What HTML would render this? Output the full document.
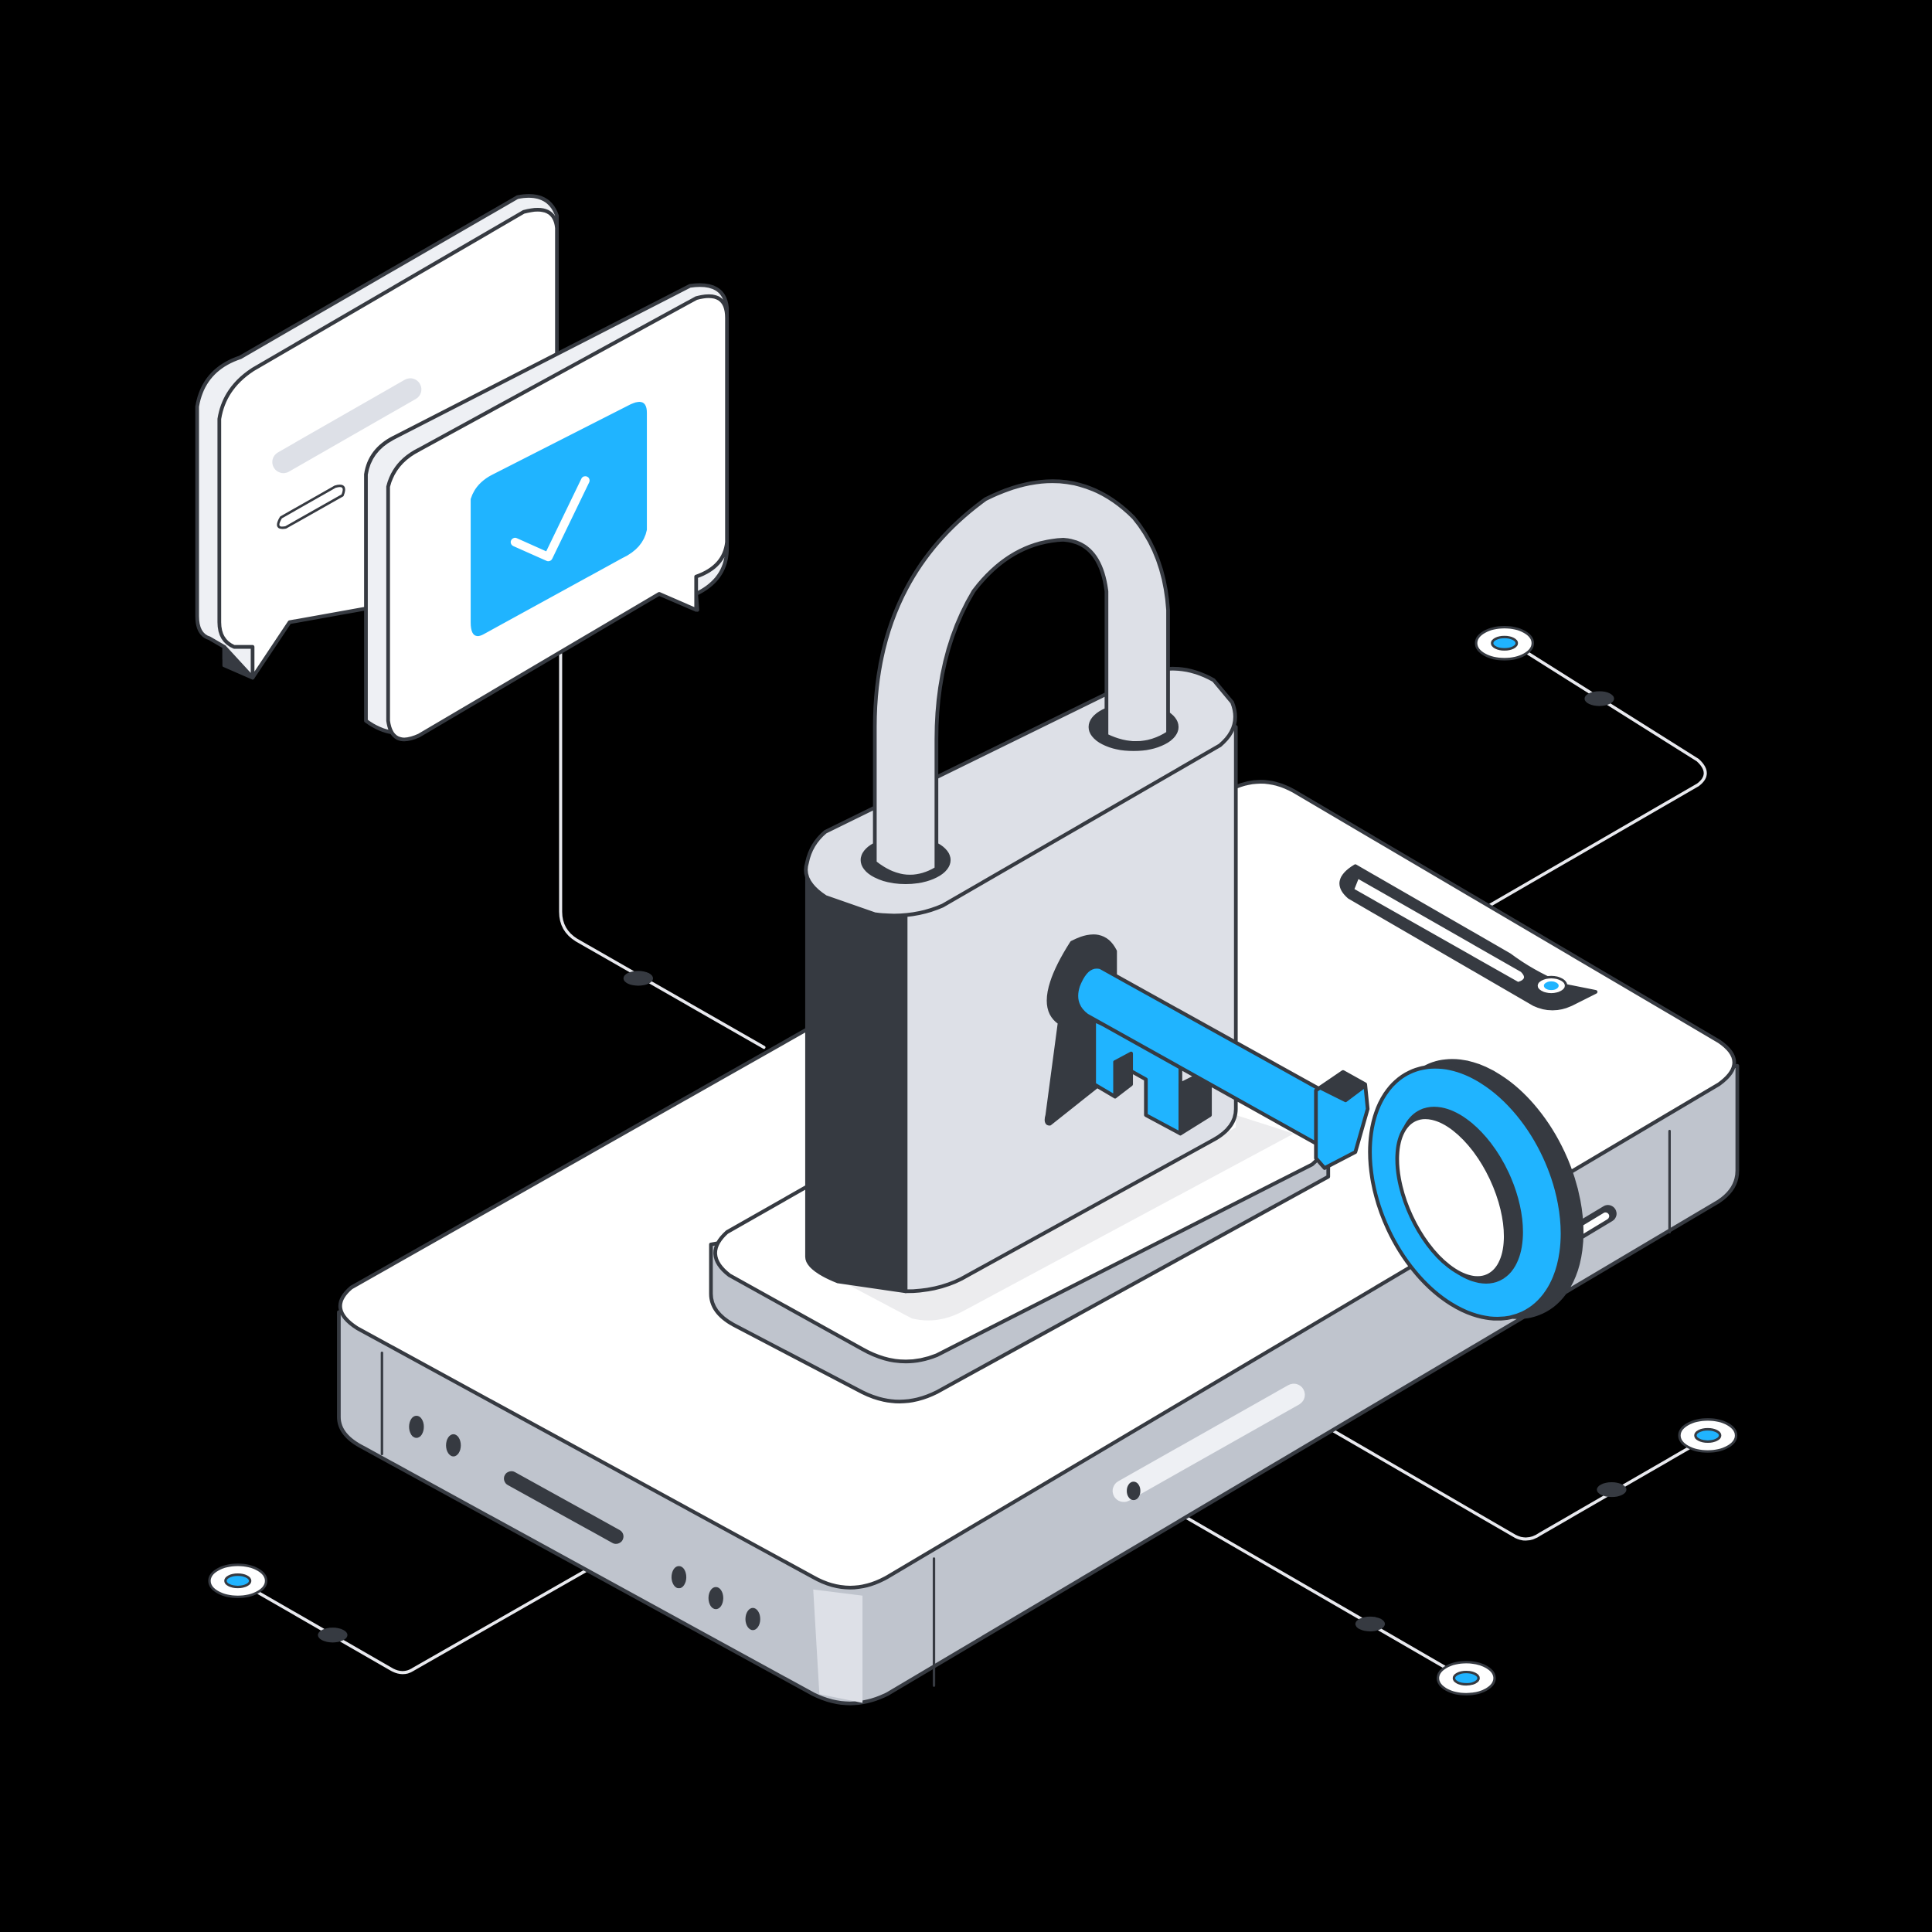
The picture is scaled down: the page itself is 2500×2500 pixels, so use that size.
<!DOCTYPE html>
<html><head><style>html,body{margin:0;padding:0;background:#000;}svg{display:block}</style></head>
<body>
<svg width="2500" height="2500" viewBox="0 0 1568 1568" xmlns="http://www.w3.org/2000/svg" stroke-linejoin="round" stroke-linecap="round">
<rect width="1568" height="1568" fill="#000"/>
<g fill="none" stroke="#e8e9ee" stroke-width="2.5">
<path d="M455 530 V740 Q455 755 468 763 L620 850"/>
<path d="M1200 740 L1378 637 Q1390 628 1378 617 L1235 527"/>
<path d="M1080 1160 L1230 1247 Q1240 1252 1250 1245 L1385 1167"/>
<path d="M960 1230 L1188 1362"/>
<path d="M475 1275 L335 1355 Q327 1360 318 1355 L193 1283"/>
</g>
<g fill="#363a41">
<ellipse cx="518" cy="794" rx="12" ry="6"/><ellipse cx="1298" cy="567" rx="12" ry="6"/>
<ellipse cx="1308" cy="1209" rx="12" ry="6"/><ellipse cx="1112" cy="1318" rx="12" ry="6"/>
<ellipse cx="270" cy="1327" rx="12" ry="6"/>
</g>
<g stroke="#363a41" stroke-width="2">
<ellipse cx="1221" cy="522" rx="23" ry="13" fill="#fff"/><ellipse cx="1221" cy="522" rx="10" ry="5" fill="#20b4ff"/>
<ellipse cx="1386" cy="1165" rx="23" ry="13" fill="#fff"/><ellipse cx="1386" cy="1165" rx="10" ry="5" fill="#20b4ff"/>
<ellipse cx="1190" cy="1362" rx="23" ry="13" fill="#fff"/><ellipse cx="1190" cy="1362" rx="10" ry="5" fill="#20b4ff"/>
<ellipse cx="193" cy="1283" rx="23" ry="13" fill="#fff"/><ellipse cx="193" cy="1283" rx="10" ry="5" fill="#20b4ff"/>
</g>
<!-- phone -->
<g stroke="#363a41" stroke-width="3">
<path d="M275 1065 L275 1150 Q275 1165 295 1175 L660 1375 Q690 1390 720 1375 L1395 975 Q1410 965 1410 950 L1410 865 Z" fill="#bfc4cd"/>
<path d="M660 1290 L665 1375 L700 1382 L700 1295Z" fill="#dde0e7" stroke="none"/>
<path d="M285 1045 L1000 640 Q1025 628 1050 642 L1395 845 Q1420 862 1395 880 L720 1280 Q690 1297 660 1280 L290 1078 Q265 1062 285 1045 Z" fill="#fff"/>
<path d="M310 1098 V1180 M758 1265 V1368 M1355 918 V1000" fill="none" stroke-width="2"/>
<path d="M1100 703 L1225 775 Q1245 790 1270 800 L1295 805 L1275 815 Q1260 822 1245 815 L1095 728 Q1080 715 1100 703Z" fill="#363a41"/>
<path d="M1102 712 L1235 788 Q1242 795 1232 798 L1098 722 Z" fill="#fff" stroke-width="2"/>
<ellipse cx="1259" cy="800" rx="12" ry="7" fill="#fff" stroke-width="2"/><ellipse cx="1259" cy="800" rx="6" ry="3.5" fill="#20b4ff" stroke="none"/>
<path d="M415 1200 L500 1247" stroke-width="12" fill="none"/>
<path d="M912 1210 L1050 1132" stroke="#eef0f4" stroke-width="18" fill="none"/>
<ellipse cx="920" cy="1210" rx="4" ry="6" fill="#363a41"/>
<path d="M1230 1030 L1305 985" stroke-width="14" fill="none"/>
<path d="M1232 1030 L1303 987" stroke="#fff" stroke-width="6" fill="none"/>
</g>
<g fill="#363a41"><ellipse cx="338" cy="1158" rx="6" ry="9"/><ellipse cx="368" cy="1173" rx="6" ry="9"/>
<ellipse cx="551" cy="1280" rx="6" ry="9"/><ellipse cx="581" cy="1297" rx="6" ry="9"/><ellipse cx="611" cy="1314" rx="6" ry="9"/></g>
<!-- lock base -->
<g stroke="#363a41" stroke-width="3">
<path d="M577 1010 V1050 Q577 1065 595 1075 L700 1130 Q730 1145 760 1130 L1078 955 V920 Z" fill="#bfc4cd"/>
<path d="M590 1000 L880 835 Q905 825 925 835 L1065 915 Q1085 928 1065 945 L760 1100 Q730 1112 700 1095 L592 1035 Q570 1018 590 1000 Z" fill="#fff"/>
<path d="M655 1025 L740 1070 Q760 1075 780 1065 L1050 920 L1003 905 L1003 915 L780 1040 Z" fill="#ececee" stroke="none"/>
<!-- lock body -->
<path d="M655 700 V1020 Q655 1030 680 1040 L735 1048 L735 740 Z" fill="#363a41"/>
<path d="M735 740 L1003 590 V900 Q1003 915 985 925 L780 1038 Q760 1048 735 1048 Z" fill="#dde0e7"/>
<path d="M670 675 L935 545 Q960 538 985 552 L1000 570 Q1008 590 990 605 L765 735 Q740 746 710 742 L670 728 Q650 715 655 700 Q658 685 670 675 Z" fill="#dde0e7"/>
<ellipse cx="735" cy="698" rx="35" ry="18" fill="#363a41"/>
<ellipse cx="920" cy="590" rx="35" ry="18" fill="#363a41"/>
<path d="M710 700 V590 Q710 470 800 405 Q870 370 920 420 Q945 450 948 495 V595 Q925 610 898 597 V480 Q893 440 863 438 Q820 440 790 480 Q760 530 760 600 V705 Q735 720 710 700 Z" fill="#dde0e7"/>
<path d="M870 765 Q895 752 905 772 V870 L852 912 Q848 912 850 905 L860 830 Q838 815 870 765 Z" fill="#363a41"/>
<!-- key bit -->
<path d="M888 828 L888 880 L905 890 L905 862 L930 876 L930 905 L958 920 L958 860 Z" fill="#20b4ff"/>
<path d="M905 862 L918 855 L918 880 L905 890 Z" fill="#363a41"/>
<path d="M958 880 L982 868 L982 905 L958 920 Z" fill="#363a41"/>
<!-- key shaft -->
<path d="M893 785 L1082 890 L1068 928 L882 824 Q870 815 875 800 Q882 782 893 785 Z" fill="#20b4ff"/>
<!-- ring -->
<ellipse cx="1205" cy="965" rx="70" ry="110" transform="rotate(-25 1205 965)" fill="#363a41"/>
<path d="M1068 885 L1090 870 L1108 880 L1110 900 L1100 935 L1075 948 L1068 940 Z" fill="#20b4ff"/>
<path d="M1072 883 L1090 871 L1108 881 L1092 893 Z" fill="#363a41"/>
<ellipse cx="1190" cy="968" rx="70" ry="108" transform="rotate(-25 1190 968)" fill="#20b4ff"/>
<ellipse cx="1185" cy="970" rx="42" ry="75" transform="rotate(-25 1185 970)" fill="#363a41"/>
<ellipse cx="1178" cy="972" rx="36" ry="70" transform="rotate(-25 1178 972)" fill="#fff"/>
</g>
<!-- chat bubbles -->
<g stroke="#363a41" stroke-width="3">
<path d="M160 330 Q165 300 195 290 L420 160 Q445 155 452 175 V445 Q450 470 430 475 L290 470 L230 505 L205 550 L182 535 L182 525 L170 518 Q160 515 160 500 Z" fill="#eef0f4"/>
<path d="M178 340 Q182 315 205 300 L425 172 Q450 165 452 185 V440 Q450 465 430 470 L235 505 L205 550 V525 L190 525 Q178 520 178 505 Z" fill="#fff"/>
<path d="M182 525 V540 L205 550 Z" fill="#363a41"/>
<path d="M230 375 L333 316" stroke="#dde0e7" stroke-width="18" fill="none"/>
<path d="M228 420 L272 395 Q282 392 278 402 L232 428 Q222 430 228 420Z" fill="#fff" stroke-width="2"/>
<path d="M297 385 Q300 365 320 355 L560 232 Q588 228 590 250 V445 Q590 470 565 482 L566 495 L535 482 L345 590 Q320 602 297 585 Z" fill="#eef0f4"/>
<path d="M315 395 Q320 375 340 365 L565 242 Q590 235 590 258 V440 Q588 460 565 468 V495 L535 482 L340 597 Q318 607 315 585 Z" fill="#fff"/>
<path d="M382 405 Q386 392 400 385 L512 328 Q525 322 525 335 V430 Q522 445 505 453 L392 515 Q382 520 382 505 Z" fill="#20b4ff" stroke="none"/>
<path d="M418 440 L445 452 L475 390" stroke="#fff" stroke-width="7" fill="none"/>
</g>
</svg>
</body></html>
